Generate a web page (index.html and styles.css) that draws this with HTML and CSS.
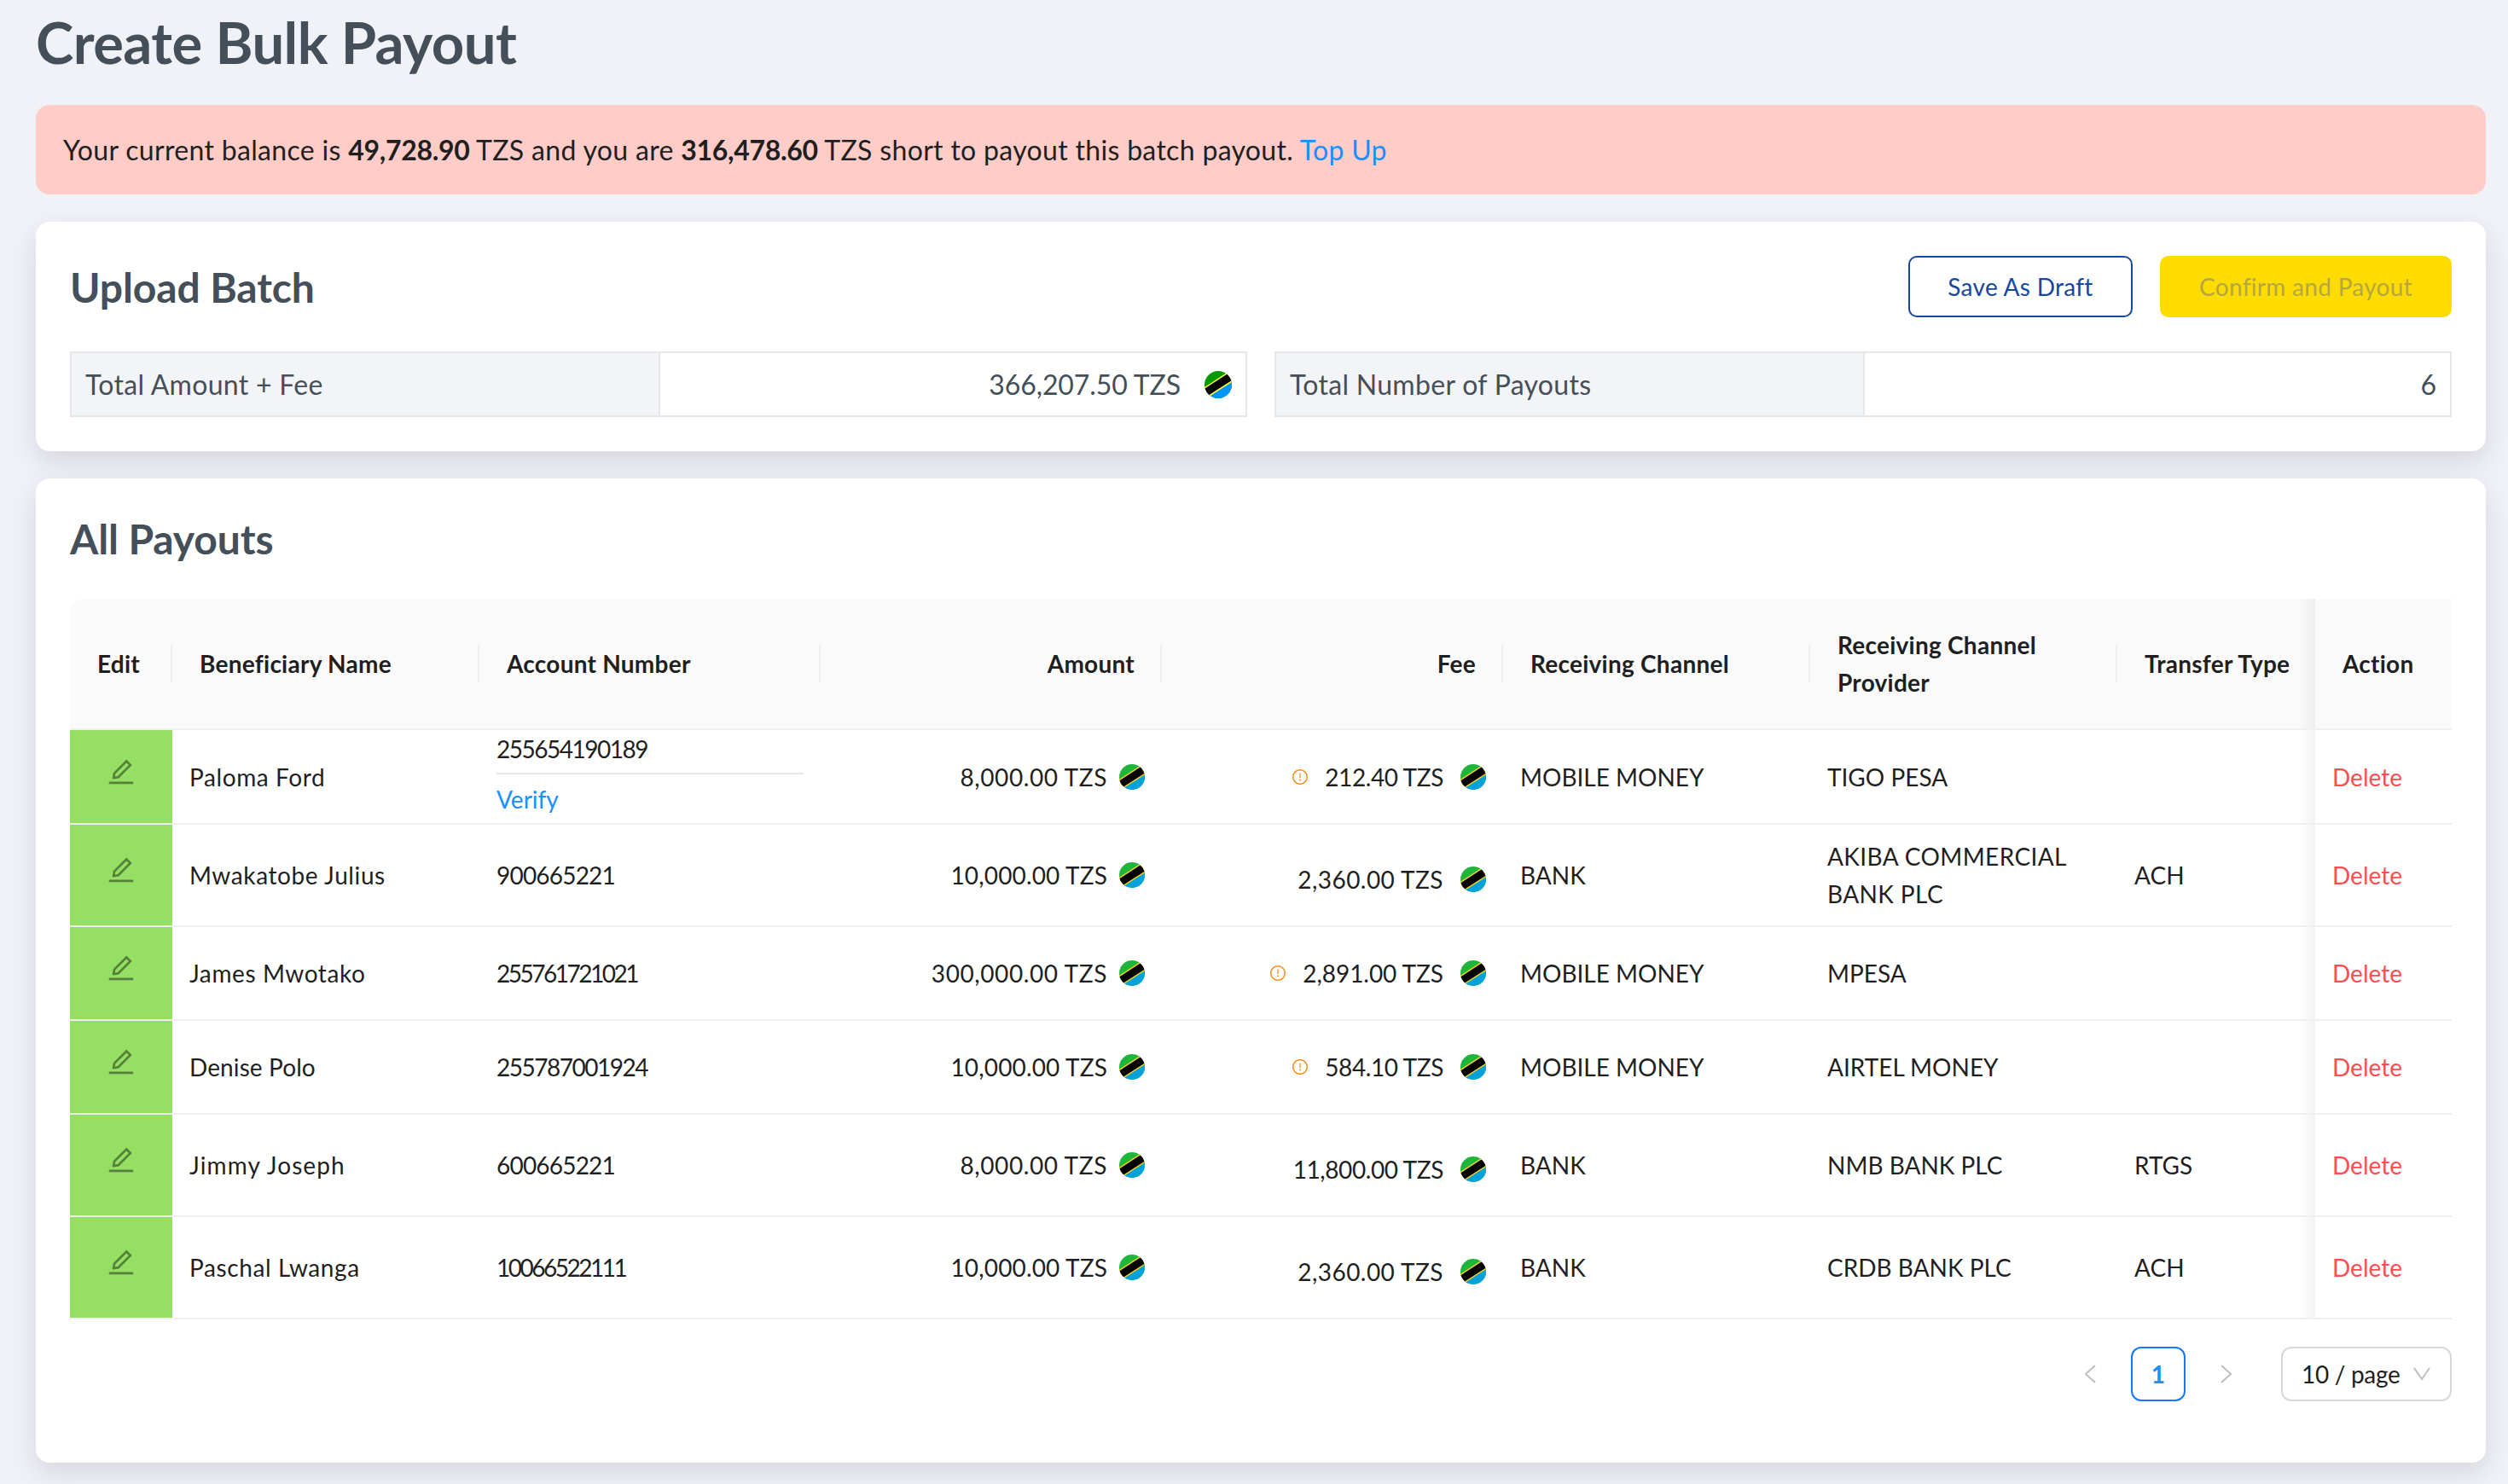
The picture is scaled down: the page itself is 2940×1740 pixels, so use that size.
FILE: index.html
```
<!DOCTYPE html>
<html lang="en">
<head>
    <meta charset="UTF-8">
    <title>Create Bulk Payout</title>
    <link rel="stylesheet" href="styles.css">
</head>
<body>
<svg class="symbols" width="0" height="0">
    <symbol id="flag" viewBox="0 0 30 30">
        <rect width="30" height="30" fill="#1fb53b"/>
        <path d="M0 30V27.500L37 7.500V30z" fill="#00a2dd"/>
        <path d="M-4 20.300L30 -1.800V12.200L-4 34z" fill="#f9cf1e"/>
        <path d="M-4 22.100L30 0V10.400L-4 32.200z" fill="#000"/>
    </symbol>
    <symbol id="flag-bright" viewBox="0 0 30 30">
        <rect width="30" height="30" fill="#090"/>
        <path d="M0 30V27.500L37 7.500V30z" fill="#0095ff"/>
        <path d="M-4 20.300L30 -1.800V12.200L-4 34z" fill="#ff3"/>
        <path d="M-4 22.100L30 0V10.400L-4 32.200z" fill="#000"/>
    </symbol>
    <symbol id="edit" viewBox="64 64 896 896">
        <path d="M257.700 752c2 0 4-.2 6-.5L431.900 722c2-.4 3.900-1.300 5.300-2.800l423.900-423.900a9.960 9.960 0 000-14.100L694.900 114.900c-1.900-1.900-4.400-2.900-7.100-2.900s-5.200 1-7.100 2.900L256.800 538.800c-1.500 1.500-2.400 3.300-2.800 5.300l-29.500 168.200a33.500 33.500 0 009.400 29.800c6.600 6.400 14.900 9.900 23.800 9.900zm67.400-174.400L687.800 215l73.300 73.300-362.700 362.600-88.900 15.700 15.600-89zM880 836H144c-17.700 0-32 14.300-32 32v36c0 4.400 3.600 8 8 8h784c4.400 0 8-3.600 8-8v-36c0-17.700-14.300-32-32-32z"/>
    </symbol>
    <symbol id="info" viewBox="64 64 896 896">
        <path d="M512 64C264.600 64 64 264.600 64 512s200.600 448 448 448 448-200.600 448-448S759.400 64 512 64zm0 820c-205.400 0-372-166.600-372-372s166.600-372 372-372 372 166.600 372 372-166.600 372-372 372z"/>
        <path d="M464 688a48 48 0 1096 0 48 48 0 10-96 0zm24-112h48c4.400 0 8-3.600 8-8V296c0-4.400-3.600-8-8-8h-48c-4.400 0-8 3.600-8 8v272c0 4.400 3.600 8 8 8z"/>
    </symbol>
</svg>

<h1 class="page-title">Create Bulk Payout</h1>

<div class="alert">
    Your current balance is <strong>49,728.90</strong> TZS and you are <strong>316,478.60</strong> TZS short to payout this batch payout. <a class="link">Top Up</a>
</div>

<div class="card upload">
    <div class="card-head">
        <h2>Upload Batch</h2>
        <div class="actions">
            <button class="btn btn-outline">Save As Draft</button>
            <button class="btn btn-yellow" disabled>Confirm and Payout</button>
        </div>
    </div>
    <div class="summary">
        <div class="item">
            <div class="label">Total Amount + Fee</div>
            <div class="value">366,207.50 TZS <svg class="flag-lg"><use href="#flag-bright"/></svg></div>
        </div>
        <div class="item">
            <div class="label">Total Number of Payouts</div>
            <div class="value">6</div>
        </div>
    </div>
</div>

<div class="card payouts">
    <h2>All Payouts</h2>
    <table>
        <colgroup>
            <col class="w-edit"><col class="w-md"><col class="w-lg"><col class="w-lg"><col class="w-lg"><col class="w-md"><col class="w-md"><col class="w-type"><col class="w-action">
        </colgroup>
        <thead>
            <tr>
                <th>Edit</th>
                <th>Beneficiary Name</th>
                <th>Account Number</th>
                <th class="right">Amount</th>
                <th class="right">Fee</th>
                <th>Receiving Channel</th>
                <th>Receiving Channel Provider</th>
                <th class="type">Transfer Type</th>
                <th class="action">Action</th>
            </tr>
        </thead>
        <tbody>
            <tr>
                <td class="edit"><svg><use href="#edit"/></svg></td>
                <td class="name">Paloma Ford</td>
                <td class="account">
                    <div class="verify"><span class="n-xs">255654190189</span><hr><a class="link">Verify</a></div>
                </td>
                <td><div class="money"><span class="n-lg">8,000.00 TZS</span><svg class="flag"><use href="#flag"/></svg></div></td>
                <td><div class="money fee"><svg class="info"><use href="#info"/></svg><span class="n-sm">212.40 TZS</span><svg class="flag"><use href="#flag"/></svg></div></td>
                <td>MOBILE MONEY</td>
                <td>TIGO PESA</td>
                <td class="type"></td>
                <td class="action"><a>Delete</a></td>
            </tr>
            <tr class="tall">
                <td class="edit"><svg><use href="#edit"/></svg></td>
                <td class="name">Mwakatobe Julius</td>
                <td><span class="n-sm">900665221</span></td>
                <td><div class="money"><span>10,000.00 TZS</span><svg class="flag"><use href="#flag"/></svg></div></td>
                <td><div class="money fee bank"><span class="n-md">2,360.00 TZS</span><svg class="flag"><use href="#flag"/></svg></div></td>
                <td>BANK</td>
                <td class="wide">AKIBA COMMERCIAL BANK PLC</td>
                <td class="type">ACH</td>
                <td class="action"><a>Delete</a></td>
            </tr>
            <tr>
                <td class="edit"><svg><use href="#edit"/></svg></td>
                <td class="name">James Mwotako</td>
                <td><span class="n-xxs">255761721021</span></td>
                <td><div class="money"><span class="n-lg">300,000.00 TZS</span><svg class="flag"><use href="#flag"/></svg></div></td>
                <td><div class="money fee"><svg class="info"><use href="#info"/></svg><span class="n-zero">2,891.00 TZS</span><svg class="flag"><use href="#flag"/></svg></div></td>
                <td>MOBILE MONEY</td>
                <td>MPESA</td>
                <td class="type"></td>
                <td class="action"><a>Delete</a></td>
            </tr>
            <tr>
                <td class="edit"><svg><use href="#edit"/></svg></td>
                <td class="name-sm">Denise Polo</td>
                <td><span class="n-xs">255787001924</span></td>
                <td><div class="money"><span>10,000.00 TZS</span><svg class="flag"><use href="#flag"/></svg></div></td>
                <td><div class="money fee"><svg class="info"><use href="#info"/></svg><span class="n-sm">584.10 TZS</span><svg class="flag"><use href="#flag"/></svg></div></td>
                <td>MOBILE MONEY</td>
                <td>AIRTEL MONEY</td>
                <td class="type"></td>
                <td class="action"><a>Delete</a></td>
            </tr>
            <tr class="tall">
                <td class="edit"><svg><use href="#edit"/></svg></td>
                <td class="name-lg">Jimmy Joseph</td>
                <td><span class="n-sm">600665221</span></td>
                <td><div class="money"><span class="n-lg">8,000.00 TZS</span><svg class="flag"><use href="#flag"/></svg></div></td>
                <td><div class="money fee bank"><span class="n-sm">11,800.00 TZS</span><svg class="flag"><use href="#flag"/></svg></div></td>
                <td>BANK</td>
                <td>NMB BANK PLC</td>
                <td class="type">RTGS</td>
                <td class="action"><a>Delete</a></td>
            </tr>
            <tr class="tall">
                <td class="edit"><svg><use href="#edit"/></svg></td>
                <td class="name">Paschal Lwanga</td>
                <td><span class="n-xxs">10066522111</span></td>
                <td><div class="money"><span>10,000.00 TZS</span><svg class="flag"><use href="#flag"/></svg></div></td>
                <td><div class="money fee bank"><span class="n-md">2,360.00 TZS</span><svg class="flag"><use href="#flag"/></svg></div></td>
                <td>BANK</td>
                <td>CRDB BANK PLC</td>
                <td class="type">ACH</td>
                <td class="action"><a>Delete</a></td>
            </tr>
        </tbody>
    </table>

    <div class="pagination">
        <div class="arrow"><svg viewBox="0 0 14 22"><path d="M13 1L2 11l11 10"/></svg></div>
        <div class="page">1</div>
        <div class="arrow"><svg viewBox="0 0 14 22"><path d="M1 1l11 10L1 21"/></svg></div>
        <div class="select">10 / page <svg viewBox="0 0 22 16"><path d="M2 1l9 13 9-13"/></svg></div>
    </div>
</div>
</body>
</html>
```
FILE: styles.css
```
* {
    box-sizing: border-box;
}
body {
    margin: 0;
    padding: 0 26px 0 42px;
    min-height: 1740px;
    background: #f1f2f8;
    color: #1f1f1f;
    font-family: Lato, "Open Sans", sans-serif;
    font-size: 28px;
    line-height: 44px;
    letter-spacing: 0.3px;
    overflow: hidden;
}
.symbols {
    position: absolute;
}
h1, h2 {
    margin: 0;
    color: #454f59;
    font-weight: 700;
}
h2 {
    font-size: 48px;
    line-height: 74px;
    letter-spacing: -0.1px;
}
.page-title {
    height: 123px;
    font-size: 67px;
    line-height: 99px;
    letter-spacing: -0.55px;
}
.link {
    color: #1890ff;
}
.alert {
    height: 105px;
    padding: 0 32px;
    border-radius: 16px;
    background: #ffccc7;
    font-size: 32px;
    letter-spacing: 0.32px;
    line-height: 105px;
}
.alert strong {
    font-weight: 700;
    letter-spacing: -0.3px;
}
.card {
    padding: 40px;
    border-radius: 16px;
    background: #fff;
    box-shadow: 0 14px 40px rgba(50, 50, 93, 0.08), 0 10px 24px rgba(0, 0, 0, 0.06);
}
.upload {
    height: 269px;
    margin: 32px 0;
}
.card-head {
    display: flex;
    justify-content: space-between;
    height: 72px;
    margin-bottom: 40px;
}
.actions {
    display: flex;
    gap: 32px;
}
.btn {
    width: 263px;
    height: 72px;
    padding: 0;
    border: 2px solid #1447a0;
    border-radius: 10px;
    background: #fff;
    color: #1447a0;
    font: inherit;
    letter-spacing: 0.3px;
}
.btn-yellow {
    width: 342px;
    border-color: #ffdc00;
    background: #ffdc00;
    color: #b5a642;
}
.summary {
    display: grid;
    grid-template-columns: 1fr 1fr;
    gap: 32px;
}
.item {
    display: flex;
    height: 77px;
    border: 2px solid #e5e7eb;
    color: #454f59;
    font-size: 32px;
    line-height: 73px;
}
.label {
    width: 690px;
    padding-left: 16px;
    border-right: 2px solid #e5e7eb;
    background: #f3f4f8;
}
.value {
    flex: 1;
    display: flex;
    align-items: center;
    justify-content: flex-end;
    gap: 28px;
    padding-right: 16px;
    letter-spacing: -0.1px;
}
.flag, .flag-lg {
    flex: none;
    width: 30px;
    height: 30px;
    border-radius: 50%;
}
.flag-lg {
    width: 32px;
    height: 32px;
}
.payouts {
    height: 1154px;
}
.payouts h2 {
    height: 101px;
    line-height: 62px;
}
table {
    width: 2792px;
    table-layout: fixed;
    border-collapse: separate;
    border-spacing: 0;
}
.w-edit {
    width: 120px;
}
.w-md {
    width: 360px;
}
.w-lg {
    width: 400px;
}
.w-type {
    width: 232px;
}
.w-action {
    width: 160px;
}
th {
    position: relative;
    height: 154px;
    padding: 0 32px;
    border-bottom: 2px solid #f0f0f0;
    background: #fafafa;
    font-weight: 700;
    letter-spacing: 0.25px;
    text-align: left;
}
th:first-child {
    border-top-left-radius: 16px;
}
/* column separators in the header */
th:not(.type):not(.action)::after {
    content: "";
    position: absolute;
    top: 53px;
    right: 0;
    width: 2px;
    height: 45px;
    background: #f0f0f0;
}
th.type {
    padding-right: 0;
}
th.right {
    text-align: right;
}
td {
    height: 110px;
    padding: 0 20px;
    border-bottom: 2px solid #f0f0f0;
    letter-spacing: 0;
}
.name {
    letter-spacing: 0.6px;
}
.name-sm {
    letter-spacing: 0.1px;
}
.name-lg {
    letter-spacing: 1.1px;
}
td.wide {
    letter-spacing: 0.4px;
}
tbody tr:first-child td {
    height: 111px;
}
tbody .tall td {
    height: 120px;
}
.edit {
    padding: 0;
    background: #95df64;
    background-clip: padding-box;
    text-align: center;
}
.edit svg {
    display: block;
    width: 32px;
    height: 32px;
    margin: 0 auto 12px;
    fill: #568139;
}
.verify {
    display: flex;
    flex-direction: column;
    height: 109px;
}
.verify hr {
    width: 360px;
    height: 2px;
    margin: 6px 0 7px;
    border: 0;
    background: #e5e7eb;
}
.money {
    display: flex;
    align-items: center;
    justify-content: flex-end;
    gap: 14px;
}
.fee {
    gap: 20px;
}
.bank {
    padding-top: 10px;
}
.money span {
    letter-spacing: 0.15px;
}
.info {
    width: 18px;
    height: 18px;
    fill: #fa8c16;
}
.money .n-lg {
    letter-spacing: 0.6px;
}
.money .n-md {
    letter-spacing: 0.45px;
}
.money .n-zero {
    letter-spacing: -0.05px;
}
.n-sm {
    letter-spacing: -0.8px;
}
.money .n-sm {
    letter-spacing: -0.4px;
}
.n-xs {
    letter-spacing: -1.5px;
}
.n-xxs {
    letter-spacing: -2.5px;
}
.type {
    background-image: linear-gradient(to left, rgba(5, 5, 5, 0.05), rgba(5, 5, 5, 0));
    background-origin: border-box;
    background-position: right top;
    background-repeat: no-repeat;
    background-size: 18px 100%;
}
.action a {
    color: #ff4d4f;
    letter-spacing: 0;
}
.pagination {
    display: flex;
    justify-content: flex-end;
    gap: 16px;
    margin-top: 32px;
}
.arrow, .page {
    display: flex;
    align-items: center;
    justify-content: center;
    width: 64px;
    height: 64px;
}
.page {
    border: 2px solid #1677ff;
    border-radius: 12px;
    color: #1890ff;
    font-weight: 700;
}
.pagination svg {
    width: 14px;
    height: 22px;
    fill: none;
    stroke: #bfbfbf;
    stroke-width: 2;
}
.select {
    display: flex;
    align-items: center;
    justify-content: space-between;
    width: 200px;
    height: 64px;
    margin-left: 16px;
    padding: 0 22px;
    border: 2px solid #d9d9d9;
    border-radius: 12px;
    letter-spacing: -0.3px;
}
.pagination .select svg {
    width: 22px;
    height: 16px;
}
```
